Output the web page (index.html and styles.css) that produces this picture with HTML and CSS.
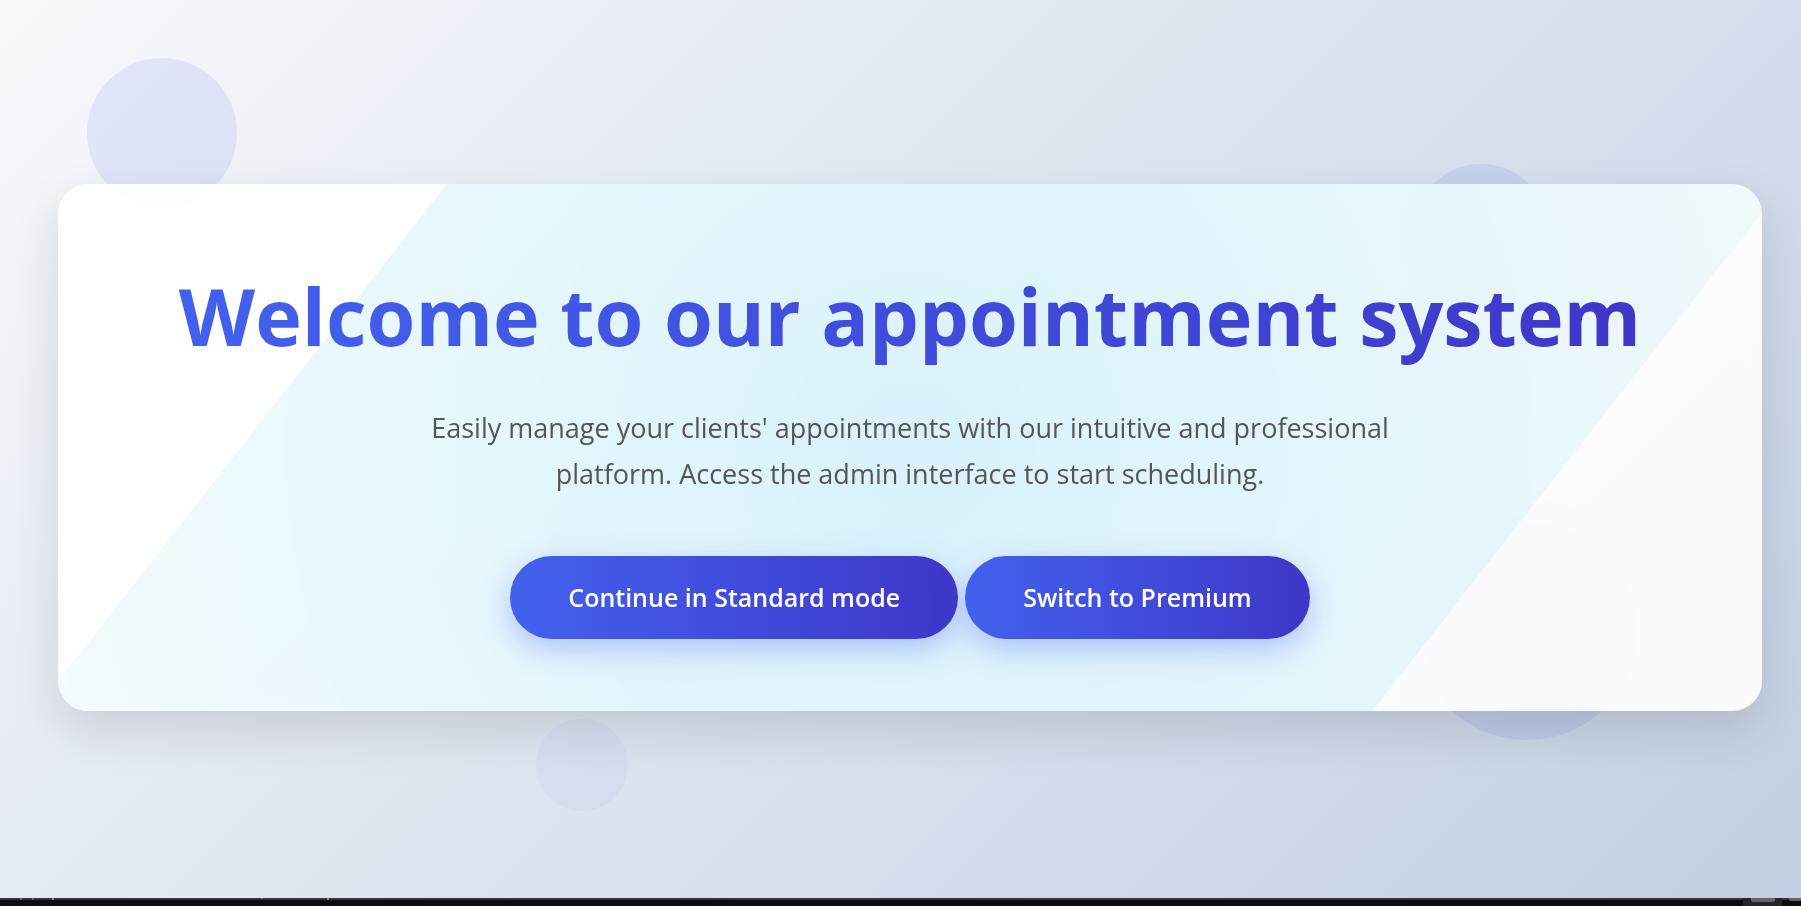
FILE: index.html
```html
<!DOCTYPE html>
<html lang="en">
<head>
<meta charset="utf-8">
<title>Appointment system</title>
<link rel="stylesheet" href="styles.css">
</head>
<body>
<main class="page">
  <div class="shape shape-1"></div>
  <div class="shape shape-2"></div>
  <div class="shape shape-3"></div>
  <div class="shape shape-4"></div>
  <section class="card">
    <h1 class="title">Welcome to our appointment system</h1>
    <p class="lead">Easily manage your clients' appointments with our intuitive and professional platform. Access the admin interface to start scheduling.</p>
    <div class="actions">
      <button type="button" class="btn">Continue in Standard mode</button>
      <button type="button" class="btn">Switch to Premium</button>
    </div>
  </section>
</main>
<footer class="strip">
  <svg class="marks" width="340" height="2" viewBox="0 0 340 2"><path d="M20 0h2v2h-2zM32 0h2v2h-2z" fill="#666"/><path d="M52 0h2v2h-2zM327 0h2v2h-2z" fill="#8a8a8a"/><path d="M261 0h2v1h-2z" fill="#666"/></svg>
  <svg class="tray" width="58" height="8" viewBox="0 0 58 8"><path d="M0 0h39v8H0z" fill="#252525"/><path d="M8 0h24v2q0 2-2 2H10q-2 0-2-2zM46 0h12v3H48q-2 0-2-2z" fill="#666"/></svg>
</footer>
</body>
</html>
```
FILE: styles.css
```css
* { box-sizing: border-box; }

body {
  margin: 0;
  min-height: 100vh;
  display: flex;
  flex-direction: column;
  font-family: "Open Sans", "Noto Sans", sans-serif;
}

.page {
  position: relative;
  flex: 1;
  display: flex;
  align-items: center;
  padding: 0 39px 4px 58px;
  overflow: hidden;
  background: linear-gradient(135deg, #f6f9fc 0%, #c3cfe2 100%);
}

.shape {
  position: absolute;
  border-radius: 50%;
  background: #4355e4;
  opacity: 0.1;
}

.shape-1 { width: 150px; height: 150px; top: 58px; left: 87px; }
.shape-2 { width: 134px; height: 134px; top: 164px; right: 253px; }
.shape-3 { width: 224px; height: 224px; bottom: 158px; right: 162px; }
.shape-4 { width: 92px; height: 92px; bottom: 87px; left: 536px; opacity: 0.04; }

.card {
  position: relative;
  flex: 1;
  padding: 78px 60px 72px;
  border-radius: 30px;
  overflow: hidden;
  text-align: center;
  background: rgba(255, 255, 255, 0.9);
  backdrop-filter: blur(10px);
  box-shadow: 0 20px 50px rgba(0, 0, 0, 0.12);
}

.card::before {
  content: "";
  position: absolute;
  z-index: -1;
  top: -50%;
  left: -50%;
  width: 200%;
  height: 200%;
  background: radial-gradient(circle, rgba(76, 201, 240, 0.2) 0%, rgba(76, 201, 240, 0) 70%);
  transform: rotate(-52deg);
}

.title {
  width: fit-content;
  margin: 0 auto 35px;
  font-size: 79px;
  font-weight: 700;
  line-height: 108px;
  color: transparent;
  background: linear-gradient(90deg, #4361ee, #3f37c9);
  background-clip: text;
}

.lead {
  max-width: 1000px;
  margin: 0 auto 59px;
  font-size: 27px;
  line-height: 46px;
  color: #555;
}

.actions {
  display: flex;
  justify-content: center;
  gap: 7px;
}

.btn {
  padding: 24px 58px;
  border: 0;
  border-radius: 50px;
  font-family: "Open Sans", "Noto Sans", sans-serif;
  font-size: 25px;
  font-weight: 600;
  line-height: 35px;
  color: #fff;
  background: linear-gradient(90deg, #4361ee, #3f37c9);
  box-shadow: 0 10px 30px rgba(67, 97, 238, 0.35);
}

.strip {
  display: flex;
  justify-content: space-between;
  height: 8px;
  background: linear-gradient(#363636 2px, #0c0c0c 2px);
}
```
